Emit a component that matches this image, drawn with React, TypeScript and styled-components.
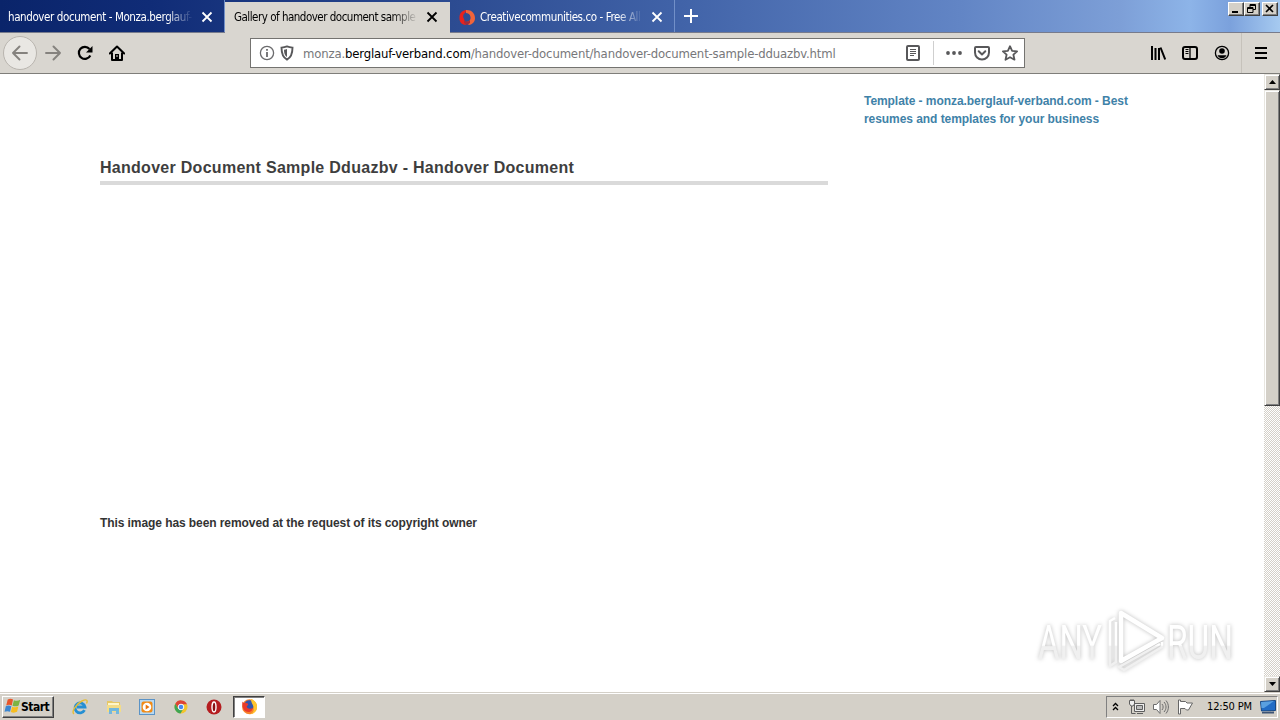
import React from "react";
import styled, { createGlobalStyle } from "styled-components";

const GlobalStyle = createGlobalStyle`
  * {
    box-sizing: border-box;
  }
  body {
    margin: 0;
    overflow: hidden;
    background: #fff;
    font-family: "DejaVu Sans Condensed", "DejaVu Sans", sans-serif;
  }
  svg {
    display: block;
    flex: none;
  }
`;

const Screen = styled.div`
  display: flex;
  flex-direction: column;
  width: 1280px;
  height: 720px;
  overflow: hidden;
`;

const TabStrip = styled.div`
  display: flex;
  height: 33px;
  background: linear-gradient(90deg, #0a246a 0, #102c77 150px, #2c4b91 450px, #4163a8 680px, #6285c5 960px, #7d9fd7 1120px, #8db4e8 1190px, #7ba1dc 1230px, #a6caf0 1280px);
  border-bottom: 1px solid #777b8c;
`;
const Tab = styled.div<{ $active?: boolean }>`
  display: flex;
  align-items: center;
  width: 225px;
  height: ${(p) => (p.$active ? 31 : 32)}px;
  margin-top: ${(p) => (p.$active ? 2 : 0)}px;
  padding: ${(p) => (p.$active ? "0 11px 2px 9px" : "2px 11px 0 8px")};
  color: ${(p) => (p.$active ? "#000" : "#fff")};
  background: ${(p) => (p.$active ? "#d9d6d0" : "transparent")};
  border-right: 1px solid ${(p) => (p.$active ? "#d9d6d0" : "#7290c8")};
`;
const TabTitle = styled.div<{ $spacing?: number }>`
  flex: 1;
  min-width: 0;
  white-space: nowrap;
  font-size: 11.5px;
  line-height: 18px;
  letter-spacing: ${(p) => p.$spacing ?? -0.4}px;
  margin-right: 8px;
  mask-image: linear-gradient(90deg, #000 calc(100% - 26px), transparent);
`;
const Favicon = styled.div`
  width: 16px;
  margin: 0 5px 0 1px;
`;
const NewTab = styled.div`
  padding: 9px 0 0 9px;
`;
const WindowButtons = styled.div`
  display: flex;
  margin: 2px 2px 0 auto;
`;
const WindowButton = styled.div<{ $gap?: boolean }>`
  width: 16px;
  height: 14px;
  margin-left: ${(p) => (p.$gap ? 2 : 0)}px;
  background: #d4d0c8;
  border: 1px solid;
  border-color: #fff #404040 #404040 #fff;
  box-shadow: inset -1px -1px #808080;
`;

const Toolbar = styled.div`
  display: flex;
  align-items: center;
  height: 41px;
  background: #d9d6d0;
  border-bottom: 1px solid #7f7e7a;
`;
const BackButton = styled.div`
  display: flex;
  align-items: center;
  justify-content: center;
  width: 34px;
  height: 34px;
  margin-left: 3px;
  border: 1px solid #b9b5af;
  border-radius: 50%;
  background: #e9e7e3;
`;
const NavButtons = styled.div`
  display: flex;
  gap: 16px;
  margin-left: 8px;
`;
const UrlBar = styled.div`
  display: flex;
  align-items: center;
  width: 775px;
  height: 30px;
  margin-left: 125px;
  padding: 0 6px 0 8px;
  background: #fff;
  border: 1px solid #747370;
`;
const ShieldIcon = styled.svg`
  margin-left: 4px;
`;
const UrlText = styled.div`
  flex: 1;
  margin-left: 8px;
  padding-top: 1px;
  color: #77777a;
  font-size: 13px;
  line-height: 20px;
  letter-spacing: -0.16px;
  white-space: nowrap;

  b {
    color: #000;
    font-weight: normal;
  }
`;
const UrlDivider = styled.div`
  width: 1px;
  height: 24px;
  margin: 0 12px 0 12px;
  background: #cfcfcf;
`;
const PageActions = styled.div`
  display: flex;
  gap: 12px;
`;
const ToolbarEnd = styled.div`
  display: flex;
  align-items: center;
  gap: 16px;
  margin: 0 11px 0 auto;
`;
const ToolbarDivider = styled.div`
  width: 1px;
  height: 40px;
  margin: 0 -5px 0 -5px;
  background: #c6c2bb;
`;

const Viewport = styled.div`
  display: flex;
  height: 618px;
`;
const Page = styled.div`
  display: flex;
  flex: 1;
  padding-left: 100px;
  font-family: "Liberation Sans", Arial, sans-serif;
  position: relative;
`;
const Article = styled.div`
  width: 728px;
`;
const Title = styled.h1`
  margin: 83px 0 0;
  padding-bottom: 3px;
  border-bottom: 4px solid #dadada;
  color: #3e3e3e;
  font-size: 16px;
  font-weight: bold;
  line-height: 21px;
  letter-spacing: 0.28px;
  white-space: nowrap;
`;
const Removed = styled.p`
  margin: 329px 0 0;
  color: #333;
  font-size: 12px;
  font-weight: bold;
  line-height: 18px;
  letter-spacing: -0.08px;
`;
const Sidebar = styled.div`
  width: 290px;
  margin: 18px 0 0 36px;
  color: #3f82a8;
  font-size: 12px;
  font-weight: bold;
  line-height: 18px;
  letter-spacing: -0.06px;
`;
const Watermark = styled.svg`
  position: absolute;
  left: 1028px;
  top: 530px;
  filter: drop-shadow(0 0 2px rgba(0, 0, 0, 0.26));
`;

const Scrollbar = styled.div`
  display: flex;
  flex-direction: column;
  width: 16px;
  background: repeating-conic-gradient(#d4d0c8 0 25%, #fff 0 50%) 0 0 / 2px 2px;
`;
const ScrollPart = styled.div<{ $height: number }>`
  display: flex;
  align-items: center;
  justify-content: center;
  height: ${(p) => p.$height}px;
  background: #d4d0c8;
  border: 1px solid;
  border-color: #e8e6e0 #404040 #404040 #e8e6e0;
  box-shadow: inset 1px 1px #fff, inset -1px -1px #808080;
`;
const ScrollSpace = styled.div`
  flex: 1;
`;

const Taskbar = styled.div`
  display: flex;
  align-items: center;
  height: 28px;
  padding: 2px 2px 2px;
  background: #d4d0c8;
  border-top: 1px solid #d4d0c8;
  box-shadow: inset 0 1px #fff;
`;
const StartButton = styled.div`
  display: flex;
  align-items: center;
  width: 52px;
  height: 22px;
  padding-left: 1px;
  border: 1px solid;
  border-color: #fff #404040 #404040 #fff;
  box-shadow: inset -1px -1px #808080;
  font-size: 12px;
  font-weight: bold;
  letter-spacing: -0.5px;
`;
const QuickLaunch = styled.div`
  display: flex;
  align-items: center;
  gap: 17.5px;
  margin-left: 18px;
`;
const RunningApp = styled.div`
  display: flex;
  align-items: center;
  justify-content: center;
  width: 32px;
  height: 22px;
  margin-left: 11px;
  background: #fff;
  border: 1px solid;
  border-color: #404040 #fff #fff #404040;
  box-shadow: inset 1px 1px #808080;
`;
const Tray = styled.div`
  display: flex;
  align-items: center;
  width: 172px;
  height: 22px;
  margin-left: auto;
  padding-left: 5px;
  border: 1px solid;
  border-color: #808080 #fff #fff #808080;
`;
const TrayIcons = styled.div`
  display: flex;
  gap: 8px;
  margin-left: 10px;
`;
const Clock = styled.div`
  width: 46px;
  margin: 0 7px 0 14px;
  font-size: 11px;
  letter-spacing: -0.15px;
  white-space: nowrap;
`;

interface IconProps {
  color?: string;
}

const CloseIcon = ({ color = "#fff" }: IconProps) => (
  <svg width="12" height="12" viewBox="0 0 12 12" stroke={color} strokeWidth="1.8">
    <path d="M1.5 1.5l9 9M10.5 1.5l-9 9" />
  </svg>
);

const ArrowIcon = ({ flip }: { flip?: boolean }) => (
  <svg width="16" height="16" viewBox="0 0 16 16" fill="none" stroke="#85827e" strokeWidth="1.9" strokeLinecap="round" strokeLinejoin="round">
    <path d={flip ? "M1 8h14M8.5 1.5L15 8l-6.5 6.5" : "M15 8H1M7.5 1.5L1 8l6.5 6.5"} />
  </svg>
);

const FirefoxIcon = () => (
  <svg width="17" height="17" viewBox="0 0 17 17">
    <circle cx="8.5" cy="8.8" r="7.5" fill="#f7822a" />
    <circle cx="8.3" cy="7" r="4.8" fill="#3154ad" />
    <path d="M1.3 3.5C2 5 3 4.5 5 5c2 .2 2.5 1 2 2-1 1-2 1.5-.5 3 1.5 1.2 4 1 5-.5.5 2-1 4.5-4 4.5C3 14 1 10 1.3 3.5z" fill="#ea3a2a" />
    <path d="M10 1c3.5 1 6.3 4 6 8 0 4-3 7-7 7.2 4-1.5 4-4 3.5-7.2-.5-3-2.5-4-2.5-8z" fill="#ffc52d" />
  </svg>
);

const App = () => (
  <>
    <GlobalStyle />
    <Screen>
      <TabStrip>
        <Tab>
          <TabTitle>handover document - Monza.berglauf-</TabTitle>
          <CloseIcon />
        </Tab>
        <Tab $active>
          <TabTitle $spacing={-0.5}>Gallery of handover document sample d</TabTitle>
          <CloseIcon color="#000" />
        </Tab>
        <Tab>
          <Favicon>
            <svg width="16" height="17" viewBox="0 0 16 17">
              <path d="M7 16C2 16 0 12 .5 7.5.8 3.5 4 1 8 1L6 4C4 5 3.5 8 5 10z" fill="#e8221d" />
              <path d="M7 1c5-.5 9 3 9 8 0 4-2.5 6.5-6 7l-4-3c4 0 6-2 5.5-5C11 5 9 4 7 4z" fill="#f0643a" />
              <path d="M5 11c2 2 4 2 6 0v3l-3 2-3-2z" fill="#a82b38" />
            </svg>
          </Favicon>
          <TabTitle>Creativecommunities.co - Free All</TabTitle>
          <CloseIcon />
        </Tab>
        <NewTab>
          <svg width="14" height="14" viewBox="0 0 14 14" stroke="#fff" strokeWidth="2">
            <path d="M7 0v14M0 7h14" />
          </svg>
        </NewTab>
        <WindowButtons>
          <WindowButton>
            <svg width="14" height="12"><path d="M3 8h6v2H3z" /></svg>
          </WindowButton>
          <WindowButton>
            <svg width="14" height="12" fill="none" stroke="#000">
              <path d="M5 4V1.5h5.5v5H8M5 2.5h5M2.5 4.5H8v5H2.5zM2.5 5.5H8" />
            </svg>
          </WindowButton>
          <WindowButton $gap>
            <svg width="14" height="12" stroke="#000" strokeWidth="1.6"><path d="M3 2l7 7M10 2L3 9" /></svg>
          </WindowButton>
        </WindowButtons>
      </TabStrip>

      <Toolbar>
        <BackButton>
          <ArrowIcon />
        </BackButton>
        <NavButtons>
          <ArrowIcon flip />
          <svg width="16" height="16" viewBox="0 0 16 16" fill="none" stroke="#000" strokeWidth="2.2">
            <path d="M13.3 10.5A6 6 0 1 1 12.5 4" />
            <path d="M15.5 1v6.5H9z" fill="#000" stroke="none" />
          </svg>
          <svg width="16" height="16" viewBox="0 0 16 16" fill="none" stroke="#000" strokeWidth="2">
            <path d="M.8 8.5L8 1.5l7.2 7" strokeLinecap="round" strokeLinejoin="round" />
            <path d="M3 7.5V15h10V7.5" strokeLinejoin="round" />
            <path d="M6 9h4v5.5H6z" fill="#000" stroke="none" />
            <path d="M8 10v2" stroke="#d9d6d0" strokeWidth="1" />
          </svg>
        </NavButtons>
        <UrlBar>
          <svg width="16" height="16" viewBox="0 0 16 16" fill="none" stroke="#6b6b6d" strokeWidth="1.3">
            <circle cx="8" cy="8" r="6.6" />
            <path d="M8 7v5M8 4v1.7" strokeWidth="1.8" />
          </svg>
          <ShieldIcon width="16" height="16" viewBox="0 0 16 16">
            <path d="M8 1.4c2 .8 4 1.1 5.5 1.2 0 6-1 9.8-5.5 12C3.5 12.4 2.5 8.6 2.5 2.6 4 2.5 6 2.2 8 1.4z" fill="none" stroke="#58585a" strokeWidth="1.9" />
            <path d="M8 4v8C5.6 10.5 5 8 5 4.7 6.2 4.6 7 4.4 8 4z" fill="#58585a" />
          </ShieldIcon>
          <UrlText>
            monza.<b>berglauf-verband.com</b>/handover-document/handover-document-sample-dduazbv.html
          </UrlText>
          <svg width="16" height="16" viewBox="0 0 16 16" fill="none" stroke="#58585a">
            <rect x="2" y="1" width="12" height="14" rx="1" strokeWidth="2" />
            <path d="M5 4.5h6M5 6.5h6M5 8.5h6M5 10.5h4" />
          </svg>
          <UrlDivider />
          <PageActions>
            <svg width="16" height="16" viewBox="0 0 16 16" fill="#58585a">
              <circle cx="2" cy="8" r="1.9" />
              <circle cx="8" cy="8" r="1.9" />
              <circle cx="14" cy="8" r="1.9" />
            </svg>
            <svg width="16" height="16" viewBox="0 0 16 16" fill="none" stroke="#58585a" strokeWidth="2" strokeLinecap="round" strokeLinejoin="round">
              <path d="M2 2h12a1 1 0 0 1 1 1v4.5a7 7 0 0 1-14 0V3a1 1 0 0 1 1-1z" />
              <path d="M4.7 6.3L8 9.5l3.3-3.2" />
            </svg>
            <svg width="16" height="16" viewBox="0 0 16 16" fill="none" stroke="#58585a" strokeWidth="1.8" strokeLinejoin="round">
              <path d="M8 1.2l2.1 4.6 5 .5-3.7 3.4 1.1 5L8 12.2l-4.500 2.500 1.100-5L.9 6.300l5-.5z" />
            </svg>
          </PageActions>
        </UrlBar>
        <ToolbarEnd>
          <svg width="16" height="16" viewBox="0 0 16 16" stroke="#000" strokeWidth="2">
            <path d="M2 1v14M5.5 3v12M9 3v12M10.5 2.5l4.7 12" />
          </svg>
          <svg width="16" height="16" viewBox="0 0 16 16" fill="none" stroke="#000" strokeWidth="2">
            <rect x="1" y="2" width="14" height="12" rx="2" />
            <path d="M8 2v12" strokeWidth="1.3" />
            <path d="M3.5 4.5h3M3.5 6.5h3M3.5 8.5h3" strokeWidth="1" />
          </svg>
          <svg width="16" height="16" viewBox="0 0 16 16">
            <circle cx="8" cy="8" r="6.6" fill="none" stroke="#000" strokeWidth="1.3" />
            <circle cx="8" cy="6" r="2.8" />
            <path d="M3.5 10.3h9c-.8 2-2.5 3-4.5 3s-3.7-1-4.5-3z" />
          </svg>
          <ToolbarDivider />
          <svg width="16" height="16" viewBox="0 0 16 16" stroke="#000" strokeWidth="2">
            <path d="M2 3h12M2 8h12M2 13h12" />
          </svg>
        </ToolbarEnd>
      </Toolbar>

      <Viewport>
        <Page>
          <Article>
            <Title>Handover Document Sample Dduazbv - Handover Document</Title>
            <Removed>This image has been removed at the request of its copyright owner</Removed>
          </Article>
          <Sidebar>
            Template - monza.berglauf-verband.com - Best
            <br />
            resumes and templates for your business
          </Sidebar>
          <Watermark width="220" height="76" viewBox="0 0 220 76">
            <defs>
              <linearGradient id="fade" x1="0" y1="0" x2="0" y2="76" gradientUnits="userSpaceOnUse">
                <stop offset=".54" stopColor="#fff" />
                <stop offset=".56" stopColor="#f0f0f0" />
              </linearGradient>
            </defs>
            <g fill="url(#fade)" fontFamily="Roboto, sans-serif" fontSize="49">
              <text x="10" y="55" textLength="64" lengthAdjust="spacingAndGlyphs">ANY</text>
              <text x="139" y="55" textLength="66" lengthAdjust="spacingAndGlyphs">RUN</text>
            </g>
            <g fill="none" stroke="#fff" strokeWidth="4.5" strokeLinejoin="round">
              <path d="M93 9l41 25-41 23z" />
              <path d="M87 14l-5 3v45l6-4V18M134 38v5L96 66l-5-3 41-23" strokeWidth="2.5" stroke="url(#fade)" />
            </g>
          </Watermark>
        </Page>
        <Scrollbar>
          <ScrollPart $height={16}>
            <svg width="7" height="4"><path d="M0 4l3.5-4L7 4z" /></svg>
          </ScrollPart>
          <ScrollPart $height={316} />
          <ScrollSpace />
          <ScrollPart $height={16}>
            <svg width="7" height="4"><path d="M0 0h7L3.5 4z" /></svg>
          </ScrollPart>
        </Scrollbar>
      </Viewport>

      <Taskbar>
        <StartButton>
          <svg width="17" height="17" viewBox="0 0 16 16">
            <path d="M3.5 1.5c2-1 3.5-.8 5 0L7.3 7c-2-1-3.5-.8-5.2 0z" fill="#e8562a" />
            <path d="M9.3 2c2 .8 4 .8 6-.3L13.8 7c-2 1-3.8 1-5.8.3z" fill="#7cb342" />
            <path d="M1.7 7.8c2-.9 3.5-.8 5.2 0l-1.2 5.2c-1.8-.8-3.3-.8-5.2 0z" fill="#3b86d1" />
            <path d="M7.7 8.2c2 .8 3.9.8 5.8-.2l-1.2 5c-2 1-3.8 1-5.9.2z" fill="#f7bd1f" />
          </svg>
          Start
        </StartButton>
        <QuickLaunch>
          <svg width="16" height="16" viewBox="0 0 16 16" fill="none">
            <path d="M12.5 11.2A5 5 0 1 1 13 8H5" stroke="#258fd3" strokeWidth="2.8" />
            <path d="M2 15C-1 13 4 5 10 2c5-2.5 6-.5 4.5 2.5" stroke="#e5bd36" strokeWidth="1.4" />
          </svg>
          <svg width="16" height="16" viewBox="0 0 16 16">
            <path d="M1 2h5l1 1h7v10H1z" fill="#e6c767" />
            <path d="M2 4h11v2H2z" fill="#fff6c9" />
            <path d="M1 6h14v7H1z" fill="#f3dc88" />
            <path d="M3 15V9h10v6h-3v-3H6v3z" fill="#72b7dd" />
          </svg>
          <svg width="16" height="16" viewBox="0 0 16 16">
            <rect x=".5" y=".5" width="15" height="15" fill="#b8d9f2" stroke="#5b93c6" />
            <rect x="2.5" y="2.5" width="11" height="11" rx="2" fill="#f28b16" />
            <circle cx="8" cy="8" r="4.3" fill="#fff" />
            <path d="M6.7 5.5L10.5 8l-3.8 2.5z" fill="#e8740c" />
          </svg>
          <svg width="16" height="16" viewBox="0 0 16 16">
            <circle cx="8" cy="8" r="6.5" fill="#f3c52c" />
            <path d="M2.3 4.8a6.5 6.5 0 0 1 11.7.5H8L5 9z" fill="#dd4437" />
            <path d="M2.3 4.8a6.5 6.5 0 0 0 5.2 9.7l3-5L5.5 10z" fill="#3fa554" />
            <circle cx="8" cy="8" r="2.8" fill="#4889ef" stroke="#fff" />
          </svg>
          <svg width="16" height="16" viewBox="0 0 16 16">
            <circle cx="8" cy="8" r="7.5" fill="#b51d20" />
            <ellipse cx="8" cy="8" rx="2" ry="5" fill="#8a1013" stroke="#fff" strokeWidth="1.4" />
          </svg>
        </QuickLaunch>
        <RunningApp>
          <FirefoxIcon />
        </RunningApp>
        <Tray>
          <svg width="7" height="9" viewBox="0 0 7 9" fill="none" stroke="#000" strokeWidth="1.3">
            <path d="M1 4l2.5-2.5L6 4M1 8l2.5-2.5L6 8" />
          </svg>
          <TrayIcons>
            <svg width="16" height="16" viewBox="0 0 16 16" fill="#eee" stroke="#5e5e5e">
              <path d="M5.5 4.5h10v8h-10z" />
              <path d="M7.5 6.5h6v4h-6z" fill="#bbb" />
              <path d="M8 14.5h6M2.5 7v7.5h4" fill="none" />
              <path d="M.5 1.5h5V5L4 7H2L.5 5zM2 0v2M4 0v2" />
            </svg>
            <svg width="16" height="16" viewBox="0 0 16 16" fill="#fff" stroke="#6c6c6c">
              <path d="M.5 5.5h3L7 1.5v13l-3.5-4h-3z" />
              <path d="M9 5c1.5 2 1.5 4 0 6M11 3c2.7 3 2.7 7 0 10M13 1.5c3.2 4 3.2 9 0 13" fill="none" />
            </svg>
            <svg width="16" height="16" viewBox="0 0 16 16" fill="#fff" stroke="#666">
              <path d="M1.5 1v14h2V9.5H8l1.5 1.5h2L15.5 4H10L8.5 2.5h-5V1z" />
            </svg>
          </TrayIcons>
          <Clock>12:50 PM</Clock>
          <svg width="16" height="14" viewBox="0 0 16 14">
            <path d="M.5 1.5l15-1v10l-14 .5z" fill="#226cc5" stroke="#174783" />
            <path d="M1 2l13-1L4 8H1.5z" fill="#5aa0e0" />
            <path d="M2 12l12-.5v2H2z" fill="#3d5475" />
          </svg>
        </Tray>
      </Taskbar>
    </Screen>
  </>
);

export default App;
